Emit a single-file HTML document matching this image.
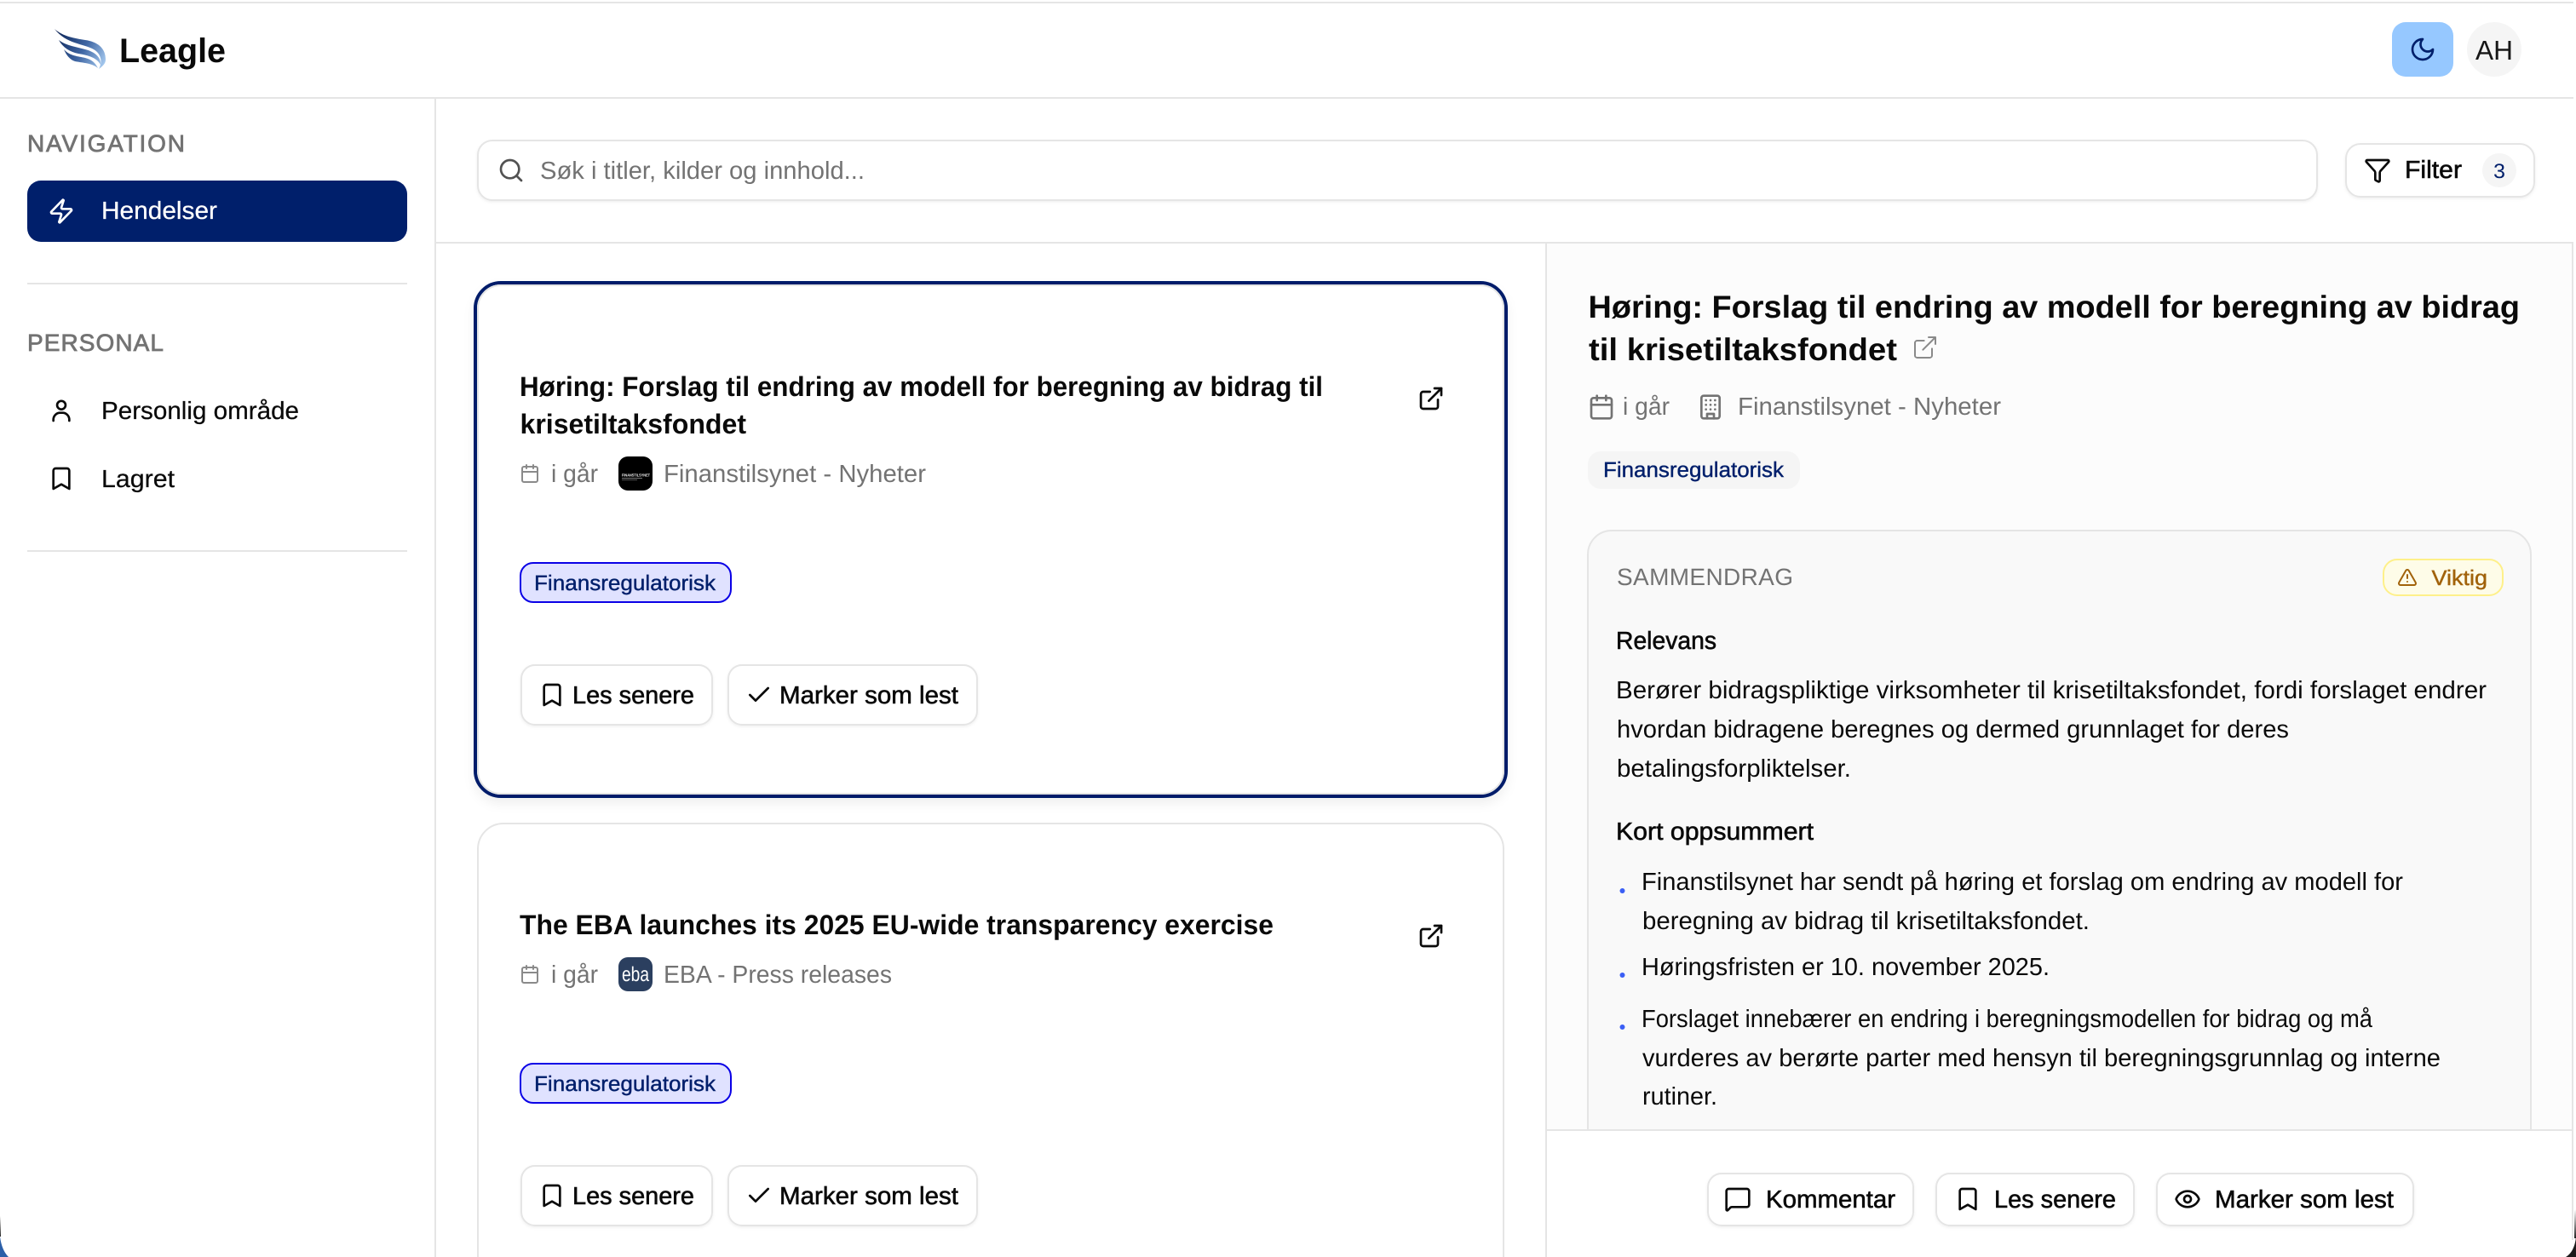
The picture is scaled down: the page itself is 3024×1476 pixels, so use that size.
<!DOCTYPE html>
<html lang="no">
<head>
<meta charset="utf-8">
<title>Leagle</title>
<style>
html,body{margin:0;padding:0;width:3024px;height:1476px;overflow:hidden;background:#fff}
svg{display:block}
text{font-family:"Liberation Sans",sans-serif;font-size:29px;fill:#0a0a0a;white-space:pre;text-rendering:geometricPrecision}
.m{stroke:#0a0a0a;stroke-width:.6px}
.g{fill:#737373}
.b{font-weight:700}
.t{font-size:25px;fill:#001f6b;stroke:#001f6b;stroke-width:.4px}
.i{fill:none;stroke:currentColor;stroke-width:2;stroke-linecap:round;stroke-linejoin:round}
.btn{fill:#fff;stroke:#e5e5e5;stroke-width:2;filter:url(#bs)}
</style>
</head>
<body>
<svg xmlns="http://www.w3.org/2000/svg" width="3024" height="1476" viewBox="0 0 3024 1476">
<defs>
<linearGradient id="w" x1="64" y1="40" x2="124" y2="75" gradientUnits="userSpaceOnUse"><stop offset="0" stop-color="#0b2355"/><stop offset=".55" stop-color="#3f66a3"/><stop offset="1" stop-color="#a9cdf2"/></linearGradient>
<linearGradient id="edge" x1="0" y1="0" x2="0" y2="1"><stop offset="0" stop-color="#fff"/><stop offset="1" stop-color="#222"/></linearGradient>
<filter id="bs" x="-5%" y="-10%" width="110%" height="125%"><feDropShadow dx="0" dy="1.5" stdDeviation="1.5" flood-color="#000" flood-opacity=".06"/></filter>
<filter id="cs" x="-3%" y="-3%" width="106%" height="108%"><feDropShadow dx="0" dy="7" stdDeviation="6" flood-color="#000" flood-opacity=".06"/></filter>
<symbol id="zap" viewBox="0 0 24 24"><path class="i" d="M4 14a1 1 0 0 1-.78-1.63l9.9-10.2a.5.5 0 0 1 .86.46l-1.92 6.02A1 1 0 0 0 13 10h7a1 1 0 0 1 .78 1.63l-9.9 10.2a.5.5 0 0 1-.86-.46l1.92-6.02A1 1 0 0 0 11 14z"/></symbol>
<symbol id="user" viewBox="0 0 24 24"><circle class="i" cx="12" cy="7.300" r="3.700"/><path class="i" d="M5 21v-1a6 6 0 0 1 6-6h2a6 6 0 0 1 6 6v1"/></symbol>
<symbol id="bm" viewBox="0 0 24 24"><path class="i" d="m19 21-7-4-7 4V5a2 2 0 0 1 2-2h10a2 2 0 0 1 2 2v16z"/></symbol>
<symbol id="moon" viewBox="0 0 24 24"><path class="i" d="M12 3a6 6 0 0 0 9 9 9 9 0 1 1-9-9Z"/></symbol>
<symbol id="search" viewBox="0 0 24 24"><circle class="i" cx="11" cy="11" r="8"/><path class="i" d="m21 21-4.3-4.3"/></symbol>
<symbol id="funnel" viewBox="0 0 24 24"><path class="i" d="M10 20a1 1 0 0 0 .553.895l2 1A1 1 0 0 0 14 21v-7a2 2 0 0 1 .517-1.341L21.74 4.67A1 1 0 0 0 21 3H3a1 1 0 0 0-.742 1.67l7.225 7.989A2 2 0 0 1 10 14z"/></symbol>
<symbol id="ext" viewBox="0 0 24 24"><path class="i" d="M15 3h6v6"/><path class="i" d="M10 14 21 3"/><path class="i" d="M18 13v6a2 2 0 0 1-2 2H5a2 2 0 0 1-2-2V8a2 2 0 0 1 2-2h6"/></symbol>
<symbol id="ext2" viewBox="0 0 24 24"><path fill="none" stroke="currentColor" stroke-width="1.5" stroke-linecap="round" stroke-linejoin="round" d="M15 3h6v6M10 14 21 3M18 13v6a2 2 0 0 1-2 2H5a2 2 0 0 1-2-2V8a2 2 0 0 1 2-2h6"/></symbol>
<symbol id="cal" viewBox="0 0 24 24"><path class="i" d="M8 2v4"/><path class="i" d="M16 2v4"/><rect class="i" x="3" y="4" width="18" height="18" rx="2"/><path class="i" d="M3 10h18"/></symbol>
<symbol id="check" viewBox="0 0 24 24"><path class="i" d="M20 6 9 17l-5-5"/></symbol>
<symbol id="bld" viewBox="0 0 24 24"><rect class="i" x="4" y="2" width="16" height="20" rx="2"/><path class="i" d="M9 22v-4h6v4"/><path class="i" d="M8 6h.01M16 6h.01M12 6h.01M12 10h.01M12 14h.01M16 10h.01M16 14h.01M8 10h.01M8 14h.01"/></symbol>
<symbol id="warn" viewBox="0 0 24 24"><path class="i" d="m21.73 18-8-14a2 2 0 0 0-3.48 0l-8 14A2 2 0 0 0 4 21h16a2 2 0 0 0 1.73-3"/><path class="i" d="M12 9v4"/><path class="i" d="M12 17h.01"/></symbol>
<symbol id="msg" viewBox="0 0 24 24"><path class="i" d="M22 17a2 2 0 0 1-2 2H6.828a2 2 0 0 0-1.414.586l-2.202 2.202A.71.71 0 0 1 2 21.286V5a2 2 0 0 1 2-2h16a2 2 0 0 1 2 2z"/></symbol>
<symbol id="eye" viewBox="0 0 24 24"><path class="i" d="M2.062 12.348a1 1 0 0 1 0-.696 10.75 10.75 0 0 1 19.876 0 1 1 0 0 1 0 .696 10.75 10.75 0 0 1-19.876 0"/><circle class="i" cx="12" cy="12" r="3"/></symbol>
</defs>

<rect width="3024" height="1476" fill="#fff"/>

<!-- right panel -->
<rect x="1816" y="286" width="1204" height="1040" fill="#fcfcfc"/>
<rect x="1864" y="623" width="1107" height="760" rx="28" fill="#f9f9f9" stroke="#e5e5e5" stroke-width="2"/>

<!-- top / header -->
<rect x="0" y="2" width="3024" height="2" fill="#e5e5e5"/>
<rect x="0" y="114" width="3024" height="2" fill="#e5e5e5"/>
<path d="M64 34C74 43 88 45 100 47C114 49 124 56 124 70C124 75 120 78 116 81C120 74 120 64 110 58C98 51 78 52 64 34Z" fill="url(#w)"/>
<path d="M69 47C78 54 90 55 100 58C112 61 119 68 118 76C114 68 104 65 92 63C82 61 74 56 69 47Z" fill="url(#w)"/>
<path d="M75 58C82 66 92 66 100 68C108 70 112 74 115 80C108 74 98 74 88 72C82 70 78 65 75 58Z" fill="url(#w)"/>
<text x="140" y="73" class="b" style="font-size:40px" textLength="125" lengthAdjust="spacingAndGlyphs">Leagle</text>

<rect x="2808" y="26" width="72" height="64" rx="16" fill="#96c8ff"/>
<use href="#moon" x="2828" y="42" width="32" height="32" style="color:#001f6b"/>
<circle cx="2928" cy="58" r="32" fill="#f5f5f5"/>
<text x="2906" y="70" style="font-size:32px;fill:#171717" textLength="44" lengthAdjust="spacingAndGlyphs">AH</text>

<!-- sidebar -->
<rect x="510" y="116" width="2" height="1360" fill="#e5e5e5"/>
<text x="32" y="178" class="g" style="font-size:28px;stroke:#737373;stroke-width:.8px" textLength="185" lengthAdjust="spacing">NAVIGATION</text>
<rect x="32" y="212" width="446" height="72" rx="16" fill="#001f6b"/>
<use href="#zap" x="56" y="232" width="32" height="32" style="color:#fff"/>
<text x="119" y="257" style="fill:#fff;stroke:#fff;stroke-width:.25px" textLength="136" lengthAdjust="spacingAndGlyphs">Hendelser</text>
<rect x="32" y="332" width="446" height="2" fill="#e5e5e5"/>
<text x="32" y="412" class="g" style="font-size:28px;stroke:#737373;stroke-width:.8px" textLength="160" lengthAdjust="spacing">PERSONAL</text>
<use href="#user" x="56" y="466" width="32" height="32" style="color:#0a0a0a"/>
<text x="119" y="492" class="m" style="stroke-width:.25px" textLength="232" lengthAdjust="spacingAndGlyphs">Personlig område</text>
<use href="#bm" x="56" y="546" width="32" height="32" style="color:#0a0a0a"/>
<text x="119" y="572" class="m" style="stroke-width:.25px" textLength="86" lengthAdjust="spacingAndGlyphs">Lagret</text>
<rect x="32" y="646" width="446" height="2" fill="#e5e5e5"/>

<!-- search row -->
<rect x="561" y="165" width="2159" height="70" rx="17" class="btn"/>
<use href="#search" x="584" y="184" width="32" height="32" style="color:#525252"/>
<text x="634" y="210" class="g" textLength="381" lengthAdjust="spacingAndGlyphs">Søk i titler, kilder og innhold...</text>
<rect x="2754" y="169" width="221" height="62" rx="17" class="btn"/>
<use href="#funnel" x="2775" y="184" width="32" height="32" style="color:#0a0a0a"/>
<text x="2823" y="209" class="m" textLength="67" lengthAdjust="spacingAndGlyphs">Filter</text>
<circle cx="2934" cy="200" r="20" fill="#f5f5f5"/>
<text x="2927" y="209" style="font-size:24px;fill:#001f6b" textLength="14" lengthAdjust="spacingAndGlyphs">3</text>
<rect x="512" y="284" width="2512" height="2" fill="#e5e5e5"/>
<rect x="1814" y="286" width="2" height="1190" fill="#e5e5e5"/>

<!-- card 2 -->
<path d="M561 1476V997a30 30 0 0 1 30-30H1735a30 30 0 0 1 30 30V1476" fill="#fff" stroke="#e5e5e5" stroke-width="2"/>
<text x="610" y="1097" class="b" style="font-size:32.500px" textLength="885" lengthAdjust="spacingAndGlyphs">The EBA launches its 2025 EU-wide transparency exercise</text>
<use href="#ext" x="1664" y="1083" width="32" height="32" style="color:#0a0a0a"/>
<use href="#cal" x="610" y="1132" width="24" height="24" style="color:#8a8a8a"/>
<text x="647" y="1154" class="g" textLength="55" lengthAdjust="spacingAndGlyphs">i går</text>
<rect x="726" y="1124" width="40" height="40" rx="11" fill="#2b3f5f"/>
<text x="730" y="1152" style="font-size:24px;fill:#fff" textLength="32" lengthAdjust="spacingAndGlyphs">eba</text>
<text x="779" y="1154" class="g" textLength="268" lengthAdjust="spacingAndGlyphs">EBA - Press releases</text>
<rect x="611" y="1249" width="247" height="46" rx="15" fill="#e0e2ff" stroke="#0a00e6" stroke-width="2"/>
<text x="627" y="1281" class="t" textLength="213" lengthAdjust="spacingAndGlyphs">Finansregulatorisk</text>
<rect x="612" y="1369" width="224" height="70" rx="16" class="btn"/>
<use href="#bm" x="632" y="1388" width="32" height="32" style="color:#0a0a0a"/>
<text x="672" y="1414" class="m" textLength="143" lengthAdjust="spacingAndGlyphs">Les senere</text>
<rect x="855" y="1369" width="292" height="70" rx="16" class="btn"/>
<use href="#check" x="875" y="1388" width="32" height="32" style="color:#0a0a0a"/>
<text x="915" y="1414" class="m" textLength="210" lengthAdjust="spacingAndGlyphs">Marker som lest</text>

<!-- card 1 -->
<rect x="558" y="332" width="1210" height="603" rx="30" fill="#fff" stroke="#001f6b" stroke-width="4" filter="url(#cs)"/>
<rect x="561" y="335" width="1204" height="597" rx="27" fill="none" stroke="#e5e5e5" stroke-width="2"/>
<text x="610" y="465" class="b" style="font-size:32.500px" textLength="943" lengthAdjust="spacingAndGlyphs">Høring: Forslag til endring av modell for beregning av bidrag til</text>
<text x="610.500" y="509" class="b" style="font-size:32.500px" textLength="265.500" lengthAdjust="spacingAndGlyphs">krisetiltaksfondet</text>
<use href="#ext" x="1664" y="452" width="32" height="32" style="color:#0a0a0a"/>
<use href="#cal" x="610" y="544" width="24" height="24" style="color:#8a8a8a"/>
<text x="647" y="566" class="g" textLength="55" lengthAdjust="spacingAndGlyphs">i går</text>
<rect x="726" y="536" width="40" height="40" rx="11" fill="#000"/>
<text x="730" y="559.500" class="b" style="font-size:4.600px;fill:#eee" textLength="33" lengthAdjust="spacingAndGlyphs">FINANSTILSYNET</text>
<rect x="730" y="561" width="24" height="1" fill="#777"/>
<rect x="730" y="563" width="18" height="1" fill="#555"/>
<text x="779" y="566" class="g" textLength="308" lengthAdjust="spacingAndGlyphs">Finanstilsynet - Nyheter</text>
<rect x="611" y="661" width="247" height="46" rx="15" fill="#e0e2ff" stroke="#0a00e6" stroke-width="2"/>
<text x="627" y="693" class="t" textLength="213" lengthAdjust="spacingAndGlyphs">Finansregulatorisk</text>
<rect x="612" y="781" width="224" height="70" rx="16" class="btn"/>
<use href="#bm" x="632" y="800" width="32" height="32" style="color:#0a0a0a"/>
<text x="672" y="826" class="m" textLength="143" lengthAdjust="spacingAndGlyphs">Les senere</text>
<rect x="855" y="781" width="292" height="70" rx="16" class="btn"/>
<use href="#check" x="875" y="800" width="32" height="32" style="color:#0a0a0a"/>
<text x="915" y="826" class="m" textLength="210" lengthAdjust="spacingAndGlyphs">Marker som lest</text>

<!-- detail panel -->
<text x="1864.500" y="373" class="b" style="font-size:37px" textLength="1093.500" lengthAdjust="spacingAndGlyphs">Høring: Forslag til endring av modell for beregning av bidrag</text>
<text x="1865" y="423" class="b" style="font-size:37px" textLength="362" lengthAdjust="spacingAndGlyphs">til krisetiltaksfondet</text>
<use href="#ext2" x="2244" y="392" width="32" height="32" style="color:#8a8a8a"/>
<use href="#cal" x="1864" y="462" width="32" height="32" style="color:#737373"/>
<text x="1905" y="487" class="g" textLength="55" lengthAdjust="spacingAndGlyphs">i går</text>
<use href="#bld" x="1992" y="462" width="32" height="32" style="color:#737373"/>
<text x="2040" y="487" class="g" textLength="309" lengthAdjust="spacingAndGlyphs">Finanstilsynet - Nyheter</text>
<rect x="1864" y="530" width="249" height="44" rx="15" fill="#f5f5f5"/>
<text x="1882" y="560" class="t" textLength="212" lengthAdjust="spacingAndGlyphs">Finansregulatorisk</text>

<text x="1898" y="687" class="g" style="font-size:28px" textLength="207" lengthAdjust="spacing">SAMMENDRAG</text>
<rect x="2798" y="657" width="140" height="42" rx="16" fill="#fefce8" stroke="#fef08a" stroke-width="2"/>
<use href="#warn" x="2814" y="666" width="24" height="24" style="color:#a1620a"/>
<text x="2854.500" y="687" style="font-size:25px;fill:#a1620a;stroke:#a1620a;stroke-width:.4px" textLength="65.500" lengthAdjust="spacingAndGlyphs">Viktig</text>

<text x="1897" y="762" class="m" textLength="118" lengthAdjust="spacingAndGlyphs">Relevans</text>
<text x="1897" y="820" textLength="1022" lengthAdjust="spacingAndGlyphs">Berører bidragspliktige virksomheter til krisetiltaksfondet, fordi forslaget endrer</text>
<text x="1898" y="866" textLength="789" lengthAdjust="spacingAndGlyphs">hvordan bidragene beregnes og dermed grunnlaget for deres</text>
<text x="1898" y="912" textLength="275" lengthAdjust="spacingAndGlyphs">betalingsforpliktelser.</text>
<text x="1897" y="986" class="m" textLength="232" lengthAdjust="spacingAndGlyphs">Kort oppsummert</text>

<circle cx="1904.500" cy="1046" r="3" fill="#3b5ff5"/>
<text x="1927" y="1045" textLength="894" lengthAdjust="spacingAndGlyphs">Finanstilsynet har sendt på høring et forslag om endring av modell for</text>
<text x="1928" y="1091" textLength="525" lengthAdjust="spacingAndGlyphs">beregning av bidrag til krisetiltaksfondet.</text>
<circle cx="1904.500" cy="1145" r="3" fill="#3b5ff5"/>
<text x="1927" y="1145" textLength="479" lengthAdjust="spacingAndGlyphs">Høringsfristen er 10. november 2025.</text>
<circle cx="1904.500" cy="1206" r="3" fill="#3b5ff5"/>
<text x="1927" y="1206" textLength="858" lengthAdjust="spacingAndGlyphs">Forslaget innebærer en endring i beregningsmodellen for bidrag og må</text>
<text x="1928" y="1252" textLength="937" lengthAdjust="spacingAndGlyphs">vurderes av berørte parter med hensyn til beregningsgrunnlag og interne</text>
<text x="1928" y="1297" textLength="88" lengthAdjust="spacingAndGlyphs">rutiner.</text>

<!-- footer -->
<rect x="1816" y="1326" width="1204" height="150" fill="#fff"/>
<rect x="1816" y="1326" width="1204" height="2" fill="#e5e5e5"/>
<rect x="2005" y="1378" width="241" height="61" rx="16" class="btn"/>
<use href="#msg" x="2024" y="1392" width="32" height="32" style="color:#0a0a0a"/>
<text x="2073" y="1418" class="m" textLength="152" lengthAdjust="spacingAndGlyphs">Kommentar</text>
<rect x="2273" y="1378" width="232" height="61" rx="16" class="btn"/>
<use href="#bm" x="2294" y="1392" width="32" height="32" style="color:#0a0a0a"/>
<text x="2341" y="1418" class="m" textLength="143" lengthAdjust="spacingAndGlyphs">Les senere</text>
<rect x="2532" y="1378" width="301" height="61" rx="16" class="btn"/>
<use href="#eye" x="2552" y="1392" width="32" height="32" style="color:#0a0a0a"/>
<text x="2600" y="1418" class="m" textLength="210" lengthAdjust="spacingAndGlyphs">Marker som lest</text>

<!-- window edges -->
<rect x="3019" y="286" width="2" height="1170" fill="#e5e5e5"/>
<rect x="3021" y="0" width="3" height="1440" fill="#fff"/>
<rect x="3022" y="1420" width="2" height="34" fill="url(#edge)"/>
<path d="M3024 1453Q3022 1470 3012 1476L3024 1476Z" fill="#1b1b1b"/>
<rect x="0" y="1428" width="1" height="24" fill="url(#edge)"/>
<path d="M0 1452Q2 1468 10 1476L0 1476Z" fill="#2b5fa8"/>
</svg>
</body>
</html>
